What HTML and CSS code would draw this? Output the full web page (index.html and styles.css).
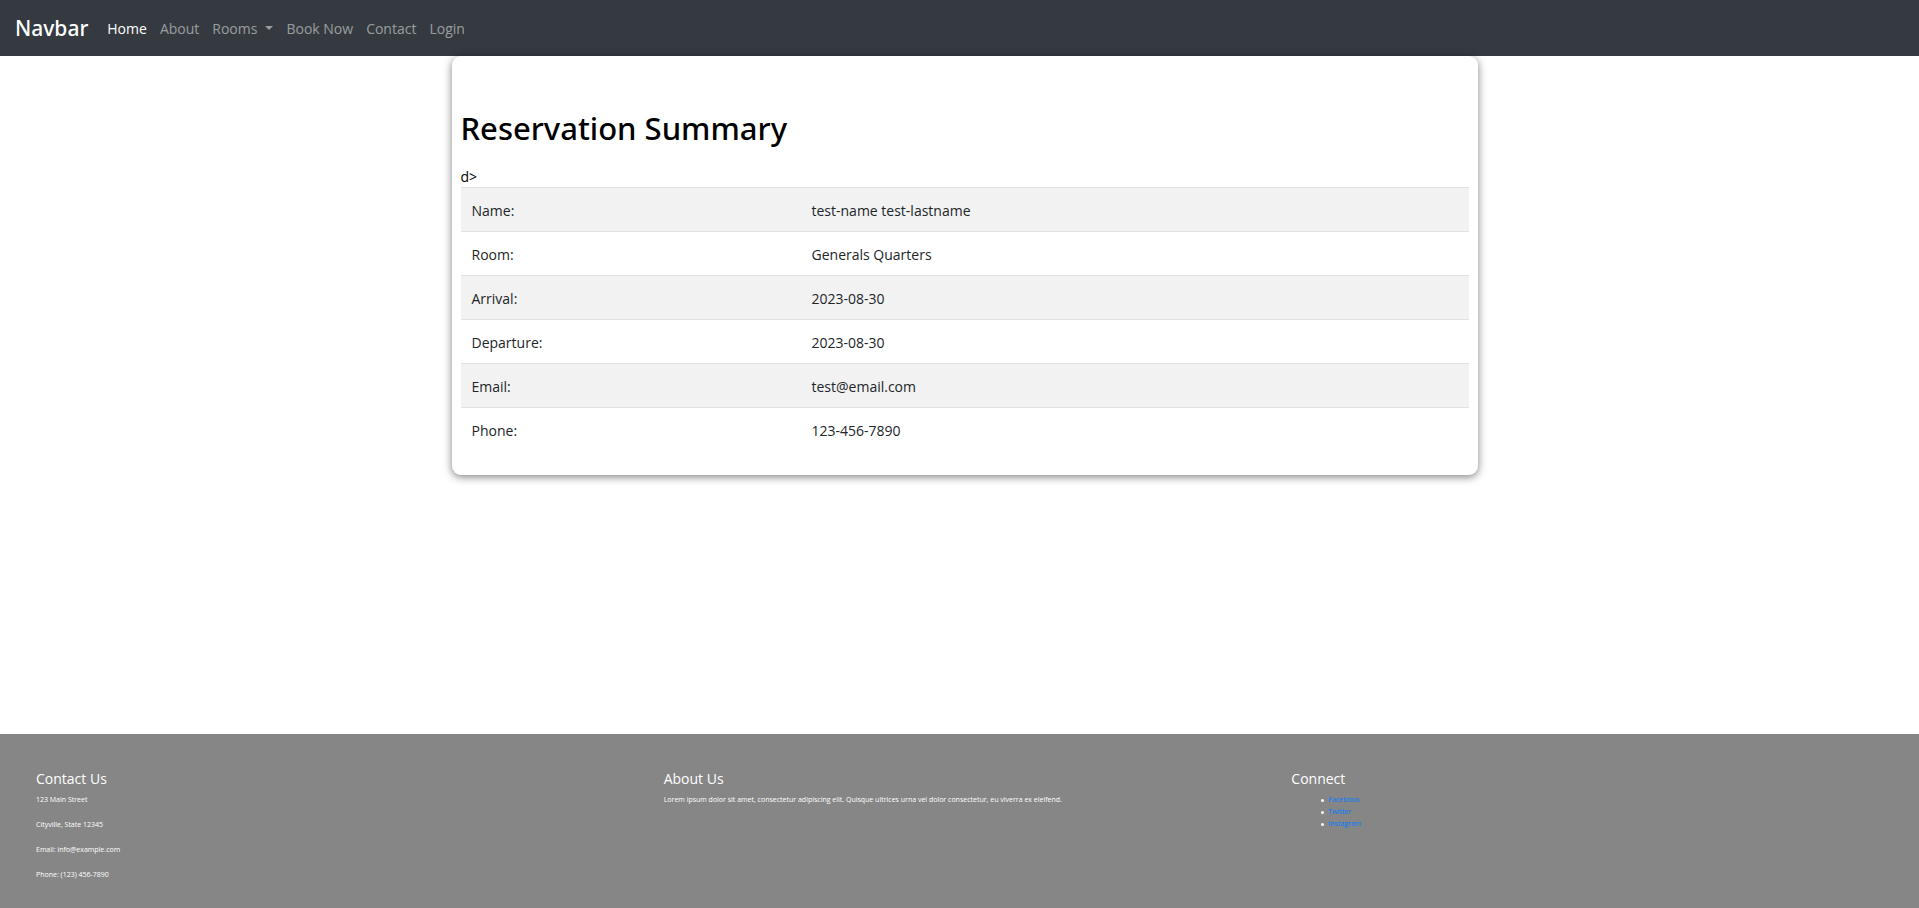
FILE: index.html
```html
<!DOCTYPE html>
<html lang="en">
<head>
<meta charset="utf-8">
<meta name="viewport" content="width=device-width, initial-scale=1">
<title>Reservation Summary</title>
<link rel="stylesheet" href="styles.css">
</head>
<body class="page">
<nav class="navbar">
  <a class="navbar-brand" href="#">Navbar</a>
  <ul class="navbar-nav">
    <li><a class="nav-link active" href="#">Home</a></li>
    <li><a class="nav-link" href="#">About</a></li>
    <li><button class="nav-link dropdown-toggle" type="button" aria-haspopup="true">Rooms</button></li>
    <li><a class="nav-link" href="#">Book Now</a></li>
    <li><a class="nav-link" href="#">Contact</a></li>
    <li><a class="nav-link" href="#">Login</a></li>
  </ul>
</nav>
<main class="main">
  <section class="card">
    <h1 class="title">Reservation Summary</h1>
    <div class="stray">d&gt;</div>
    <table class="table">
      <tbody>
        <tr><td class="label">Name:</td><td>test-name test-lastname</td></tr>
        <tr><td class="label">Room:</td><td>Generals Quarters</td></tr>
        <tr><td class="label">Arrival:</td><td>2023-08-30</td></tr>
        <tr><td class="label">Departure:</td><td>2023-08-30</td></tr>
        <tr><td class="label">Email:</td><td>test@email.com</td></tr>
        <tr><td class="label">Phone:</td><td>123-456-7890</td></tr>
      </tbody>
    </table>
  </section>
</main>
<footer class="footer">
  <div class="footer-col">
    <h2 class="footer-title">Contact Us</h2>
    <p class="footer-text">123 Main Street</p>
    <p class="footer-text">Cityville, State 12345</p>
    <p class="footer-text">Email: info@example.com</p>
    <p class="footer-text">Phone: (123) 456-7890</p>
  </div>
  <div class="footer-col">
    <h2 class="footer-title">About Us</h2>
    <p class="footer-text">Lorem ipsum dolor sit amet, consectetur adipiscing elit. Quisque ultrices urna vel dolor consectetur, eu viverra ex eleifend.</p>
  </div>
  <div class="footer-col">
    <h2 class="footer-title">Connect</h2>
    <ul class="footer-links">
      <li><a href="#">Facebook</a></li>
      <li><a href="#">Twitter</a></li>
      <li><a href="#">Instagram</a></li>
    </ul>
  </div>
</footer>
</body>
</html>
```
FILE: styles.css
```css
*, *::before, *::after { box-sizing: border-box; }

.page {
  display: flex;
  flex-direction: column;
  min-height: 100vh;
  margin: 0;
  background: #fff;
  color: #212529;
  font: 14px/21px "Segoe UI", "Open Sans", sans-serif;
}

.navbar {
  display: flex;
  align-items: center;
  padding: 7px 15px;
  background: #343a40;
}
.navbar-brand {
  margin-right: 12px;
  color: #fff;
  font-family: "Segoe UI", "Noto Sans", sans-serif;
  font-size: 21px;
  font-weight: 500;
  line-height: 42px;
  text-decoration: none;
}
.navbar-nav {
  display: flex;
  margin: 0;
  padding: 0;
  list-style: none;
}
.nav-link {
  display: block;
  padding: 8px 6px 7px 7px;
  border: 0;
  background: none;
  color: rgba(255, 255, 255, .5);
  font: inherit;
  text-decoration: none;
}
.nav-link.active { color: #fff; }
.dropdown-toggle::after {
  content: "";
  display: inline-block;
  margin-left: 8px;
  vertical-align: 4px;
  border-top: 4px solid;
  border-right: 4px solid transparent;
  border-left: 4px solid transparent;
}

.main {
  flex: 1;
  padding-left: 10px;
}
.card {
  max-width: 1026px;
  margin: 0 auto;
  padding: 47px 9px 24px;
  border-radius: 9px;
  background: #fff;
  box-shadow: 0 2px 9px rgba(0, 0, 0, .5);
}
.title {
  margin: 0 0 14px;
  color: #000;
  font-family: "Segoe UI", "Noto Sans", sans-serif;
  font-size: 31px;
  font-weight: 500;
  line-height: 50px;
}
.stray {
  color: #000;
  line-height: 20px;
}
.table {
  width: 100%;
  border-collapse: collapse;
}
.table td {
  padding: 13px 11px 10px;
  border-top: 1px solid #dee2e6;
  line-height: 20px;
}
.table .label { width: 340px; }
.table tr:nth-child(odd) { background: #f2f2f2; }

.footer {
  display: flex;
  padding: 18px 18px 10px;
  background: #868686;
  color: #fff;
}
.footer-col {
  flex: 1;
  padding: 18px;
}
.footer-title {
  margin: 0 0 7px;
  font-size: 14px;
  font-weight: 400;
  line-height: 17px;
}
.footer-text {
  margin: 0 0 14px;
  font-size: 7px;
  line-height: 11px;
}
.footer-text:last-child { margin-bottom: 0; }
.footer-links {
  margin: 0;
  padding-left: 30px;
  font-size: 7px;
  line-height: 12px;
  list-style: none;
}
.footer-links li {
  display: flex;
  align-items: center;
  gap: 4px;
}
.footer-links li::before {
  content: "";
  width: 3px;
  height: 3px;
  border-radius: 50%;
  background: #fff;
}
.footer-links a {
  color: #007bff;
  text-decoration: none;
}
```
